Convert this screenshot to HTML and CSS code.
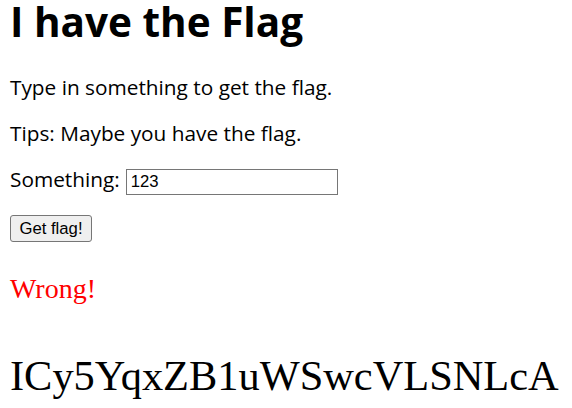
FILE: index.html
```html
<!DOCTYPE html>
<html>
<head>
<meta charset="utf-8">
<link rel="stylesheet" href="styles.css">
</head>
<body>
<h1 class="title">I have the Flag</h1>
<p class="text">Type in something to get the flag.</p>
<p class="text">Tips: Maybe you have the flag.</p>
<form class="form">
  <p class="text field"><label class="label" for="s">Something:</label><input class="input" id="s" type="text" value="123"></p>
  <button class="btn" type="button">Get flag!</button>
</form>
<p class="wrong">Wrong!</p>
<p class="flag">ICy5YqxZB1uWSwcVLSNLcA</p>
</body>
</html>
```
FILE: styles.css
```css
html, body {
  margin: 0;
  padding: 0;
  background: #fff;
}
body {
  padding: 0 10px;
  font-family: "Open Sans", "Noto Sans", sans-serif;
  color: #000;
}
.title {
  margin: 0 0 30px;
  font-size: 40.5px;
  line-height: 44px;
  font-weight: 700;
}
.text {
  margin: 20px 0;
  font-size: 20.8px;
  line-height: 26px;
}
.form {
  margin: 0;
}
.field {
  display: flex;
  align-items: flex-start;
  gap: 6px;
}
.input {
  box-sizing: border-box;
  width: 212px;
  height: 26px;
  margin: 3px 0 0;
  padding: 1px 4px;
  border: 1px solid #767676;
  border-radius: 0;
  font-family: "Liberation Sans", Arial, sans-serif;
  font-size: 16.7px;
  color: #000;
}
.btn {
  display: block;
  box-sizing: border-box;
  width: 82px;
  height: 27px;
  margin: 0;
  padding: 0 6px;
  background: #efefef;
  border: 1px solid #767676;
  border-radius: 3px;
  font-family: "Liberation Sans", Arial, sans-serif;
  font-size: 16.7px;
  color: #000;
}
.wrong {
  margin: 30px 0 0;
  font-family: "Liberation Serif", serif;
  color: #f00;
  font-size: 28px;
  line-height: 34px;
}
.flag {
  margin: 46px 0 0;
  font-family: "Liberation Serif", serif;
  font-size: 42.4px;
  line-height: 48px;
}
```
